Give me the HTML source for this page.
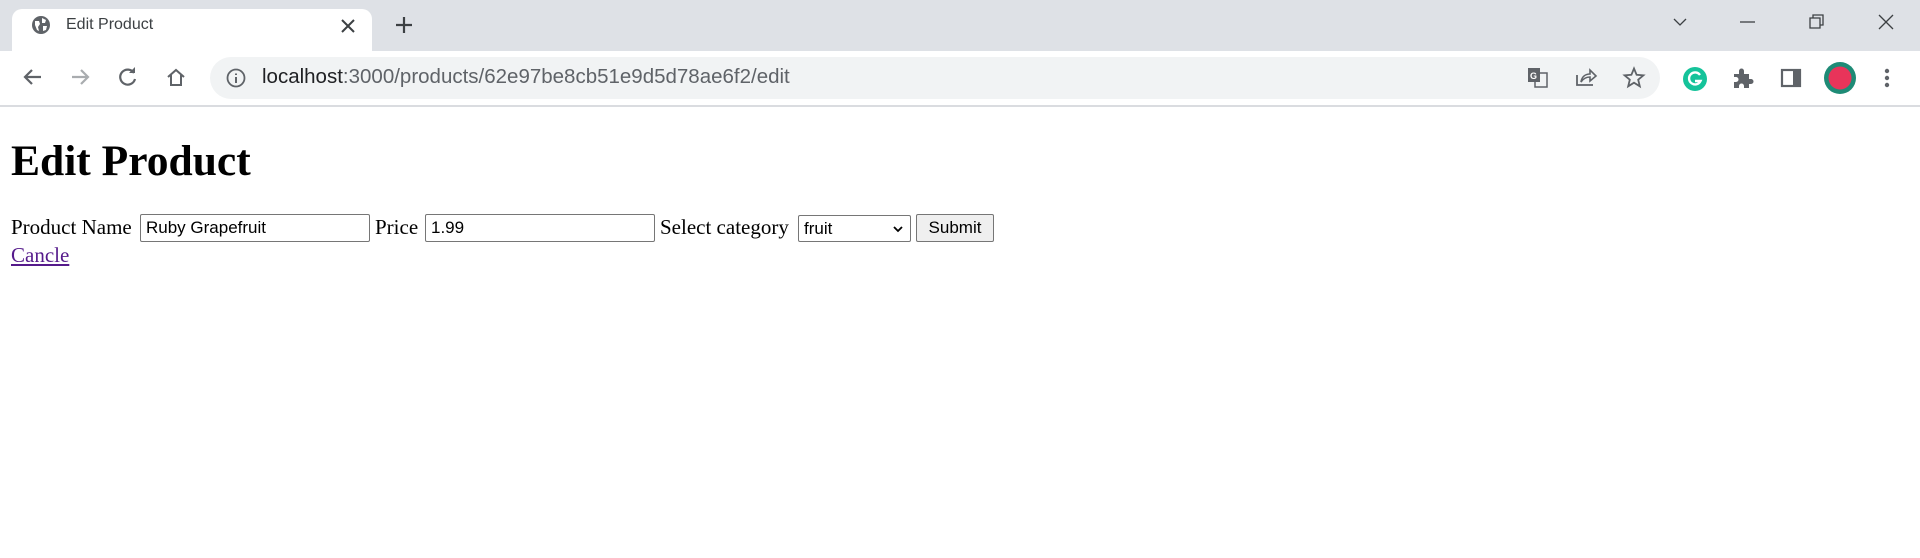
<!DOCTYPE html>
<html><head><meta charset="utf-8"><style>
*{margin:0;padding:0;box-sizing:border-box}
body{width:1920px;height:558px;background:#fff;position:relative;overflow:hidden;font-family:"Liberation Serif",serif;}
.a{position:absolute}
svg{position:absolute;overflow:visible}
.in{position:absolute;border:1px solid #767676;background:#fff;font-family:"Liberation Sans",sans-serif;font-size:17px;padding-left:5px;line-height:26px;height:28px;color:#000;border-radius:2px}
.t{position:absolute;font-size:21px;line-height:24px;color:#000}
</style></head><body>
<div class="a" style="left:0;top:0;width:1920px;height:51px;background:#dee1e6"></div>
<div class="a" style="left:12px;top:9px;width:360px;height:44px;background:#fff;border-radius:10px 10px 0 0"></div>
<svg style="left:31px;top:15px" width="20" height="20" viewBox="0 0 20 20"><circle cx="10" cy="10" r="9" fill="#5f6368"/><path d="M4 6 L8 6 L9 9 L7 12 L8 16 L6 15 L4 10Z M11 3 L15 5 L14 8 L11 8Z M12 11 L16 11 L15 15 L12 16Z" fill="#fff"/></svg>
<div class="a" style="left:66px;top:16px;font:16px 'Liberation Sans',sans-serif;color:#3c4043">Edit Product</div>
<svg style="left:341px;top:19px" width="14" height="14"><path d="M1 1L13 13M13 1L1 13" stroke="#3c4043" stroke-width="2"/></svg>
<svg style="left:395px;top:16px" width="18" height="18"><path d="M9 1V17M1 9H17" stroke="#3c4043" stroke-width="2.2"/></svg>
<svg style="left:1673px;top:17px" width="14" height="10"><path d="M1 2L7 8L13 2" stroke="#3c4043" stroke-width="1.3" fill="none"/></svg>
<svg style="left:1740px;top:21px" width="16" height="2"><path d="M0 1H15" stroke="#3c4043" stroke-width="1.3"/></svg>
<svg style="left:1809px;top:14px" width="16" height="16"><path d="M1 4H11V14H1Z M4 4V1H14V11H11" stroke="#3c4043" stroke-width="1.3" fill="none"/></svg>
<svg style="left:1878px;top:14px" width="16" height="16"><path d="M1 1L15 15M15 1L1 15" stroke="#3c4043" stroke-width="1.3"/></svg>
<div class="a" style="left:0;top:51px;width:1920px;height:54px;background:#fff"></div>
<div class="a" style="left:0;top:105px;width:1920px;height:2px;background:#dadce0"></div>
<svg style="left:22px;top:68px" width="20" height="18"><path d="M19 9H3M10 2L3 9L10 16" stroke="#5f6368" stroke-width="2.2" fill="none"/></svg>
<svg style="left:71px;top:68px" width="20" height="18"><path d="M1 9H17M10 2L17 9L10 16" stroke="#a9acaf" stroke-width="2.2" fill="none"/></svg>
<svg style="left:118px;top:67px" width="20" height="20"><path d="M16 6A7.5 7.5 0 1 0 17 12" stroke="#5f6368" stroke-width="2.2" fill="none"/><path d="M11 6H17V0Z" fill="#5f6368"/></svg>
<svg style="left:166px;top:68px" width="20" height="20"><path d="M2 9L10 2L18 9M5 7V17H15V7" stroke="#5f6368" stroke-width="2" fill="none"/></svg>
<div class="a" style="left:210px;top:57px;width:1450px;height:42px;background:#f1f3f4;border-radius:21px"></div>
<svg style="left:226px;top:68px" width="20" height="20"><circle cx="10" cy="10" r="8.5" stroke="#5f6368" stroke-width="1.8" fill="none"/><path d="M10 9V15M10 5.5V7" stroke="#5f6368" stroke-width="2"/></svg>
<div class="a" style="left:262px;top:65px;font:20.5px 'Liberation Sans',sans-serif;color:#5f6368;white-space:nowrap"><span style="color:#202124">localhost</span>:3000/products/62e97be8cb51e9d5d78ae6f2/edit</div>
<svg style="left:1527px;top:67px" width="22" height="22"><rect x="1" y="1" width="12" height="14" fill="#5f6368"/><rect x="8" y="6" width="12" height="14" fill="none" stroke="#5f6368" stroke-width="1.5"/><text x="3" y="12" font-size="9" fill="#fff" font-family="Liberation Sans" font-weight="bold">G</text></svg>
<svg style="left:1575px;top:67px" width="22" height="20"><path d="M2 8V18H18" stroke="#5f6368" stroke-width="1.8" fill="none"/><path d="M6 15C7 9 11 7 15 7V3L21 9L15 14V10C11 10 8 12 6 15Z" stroke="#5f6368" stroke-width="1.6" fill="none"/></svg>
<svg style="left:1623px;top:67px" width="22" height="22"><path d="M11 1.5L13.6 7.8L20.4 8.3L15.2 12.7L16.8 19.3L11 15.7L5.2 19.3L6.8 12.7L1.6 8.3L8.4 7.8Z" stroke="#5f6368" stroke-width="1.8" fill="none"/></svg>
<svg style="left:1683px;top:67px" width="24" height="24"><circle cx="12" cy="12" r="12" fill="#15c39a"/><path d="M17 8A6 6 0 1 0 17.5 14H12" stroke="#fff" stroke-width="2.4" fill="none"/></svg>
<svg style="left:1732px;top:67px" width="22" height="22"><path d="M2 7H7V4A2.5 2.5 0 0 1 12 4V7H17V12H19A2.5 2.5 0 0 1 19 17H17V21H12V19A2.5 2.5 0 0 0 7 19V21H2V15H4A2.5 2.5 0 0 0 4 10H2Z" fill="#5f6368"/></svg>
<svg style="left:1781px;top:69px" width="20" height="18"><rect x="1" y="1" width="18" height="16" stroke="#5f6368" stroke-width="2.2" fill="none"/><rect x="12" y="1" width="7" height="16" fill="#5f6368"/></svg>
<svg style="left:1824px;top:62px" width="32" height="32"><circle cx="16" cy="16" r="16" fill="#1e8b76"/><circle cx="16" cy="16" r="11.5" fill="#e8345a"/></svg>
<svg style="left:1884px;top:68px" width="6" height="20"><circle cx="3" cy="3" r="2.2" fill="#5f6368"/><circle cx="3" cy="10" r="2.2" fill="#5f6368"/><circle cx="3" cy="17" r="2.2" fill="#5f6368"/></svg>

<div class="a" style="left:11px;top:136px;font:bold 43.5px 'Liberation Serif',serif;color:#000;white-space:nowrap">Edit Product</div>
<div class="t" style="left:11px;top:215px">Product Name</div>
<div class="in" style="left:140px;top:214px;width:230px">Ruby Grapefruit</div>
<div class="t" style="left:375px;top:215px">Price</div>
<div class="in" style="left:425px;top:214px;width:230px">1.99</div>
<div class="t" style="left:660px;top:215px">Select category</div>
<div class="in" style="left:798px;top:215px;width:113px;height:27px;line-height:25px">fruit
<svg style="left:94px;top:10px" width="10" height="7"><path d="M1 1L5 5L9 1" stroke="#000" stroke-width="1.8" fill="none"/></svg></div>
<div class="in" style="left:916px;top:214px;width:78px;background:#efefef;padding:0;text-align:center">Submit</div>
<div class="t" style="left:11px;top:243px;color:#551a8b;text-decoration:underline">Cancle</div>
</body></html>
